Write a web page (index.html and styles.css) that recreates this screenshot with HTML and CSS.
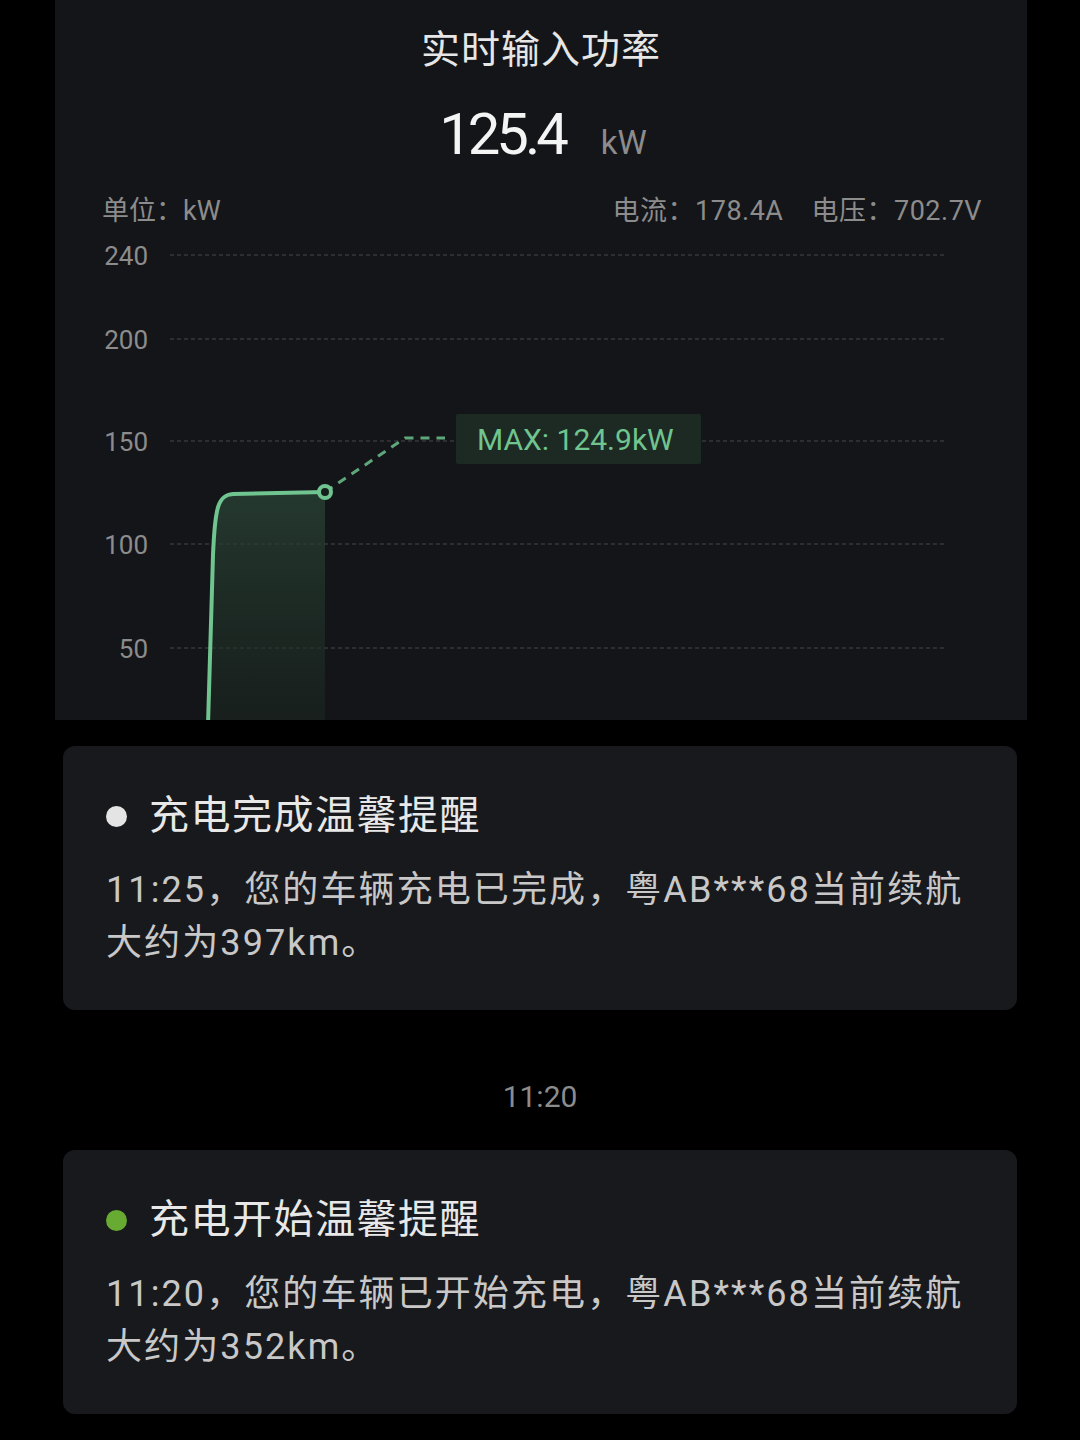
FILE: index.html
```html
<!DOCTYPE html>
<html lang="zh-CN">
<head>
  <meta charset="utf-8">
  <meta name="viewport" content="width=device-width, initial-scale=1">
  <title>充电记录</title>
  <link rel="stylesheet" href="styles.css">
</head>
<body>
  <section class="panel">
    <h1 class="panel-title">实时输入功率</h1>
    <div class="power">
      <span class="power-value">125.4</span>
      <span class="power-unit">kW</span>
    </div>
    <div class="meta">
      <span>单位：kW</span>
      <span class="meta-right">
        <span>电流：178.4A</span>
        <span>电压：702.7V</span>
      </span>
    </div>

    <svg class="chart" viewBox="0 0 972 485" width="972" height="485">
      <defs>
        <linearGradient id="area" x1="0" y1="0" x2="0" y2="1">
          <stop offset="0" stop-color="#2a4436" stop-opacity="0.75"/>
          <stop offset="1" stop-color="#1b2820" stop-opacity="0.5"/>
        </linearGradient>
      </defs>

      <g class="grid">
        <line x1="115" y1="20" x2="892" y2="20"/>
        <line x1="115" y1="104" x2="892" y2="104"/>
        <line x1="115" y1="206" x2="892" y2="206"/>
        <line x1="115" y1="309" x2="892" y2="309"/>
        <line x1="115" y1="413" x2="892" y2="413"/>
      </g>

      <g class="axis">
        <text x="93" y="30">240</text>
        <text x="93" y="114">200</text>
        <text x="93" y="216">150</text>
        <text x="93" y="319">100</text>
        <text x="93" y="423">50</text>
      </g>

      <path class="area" d="M153,490 L158,320 C160,272 163,260 178,259 L270,257 L270,490 Z"/>
      <path class="line" d="M153,490 L158,320 C160,272 163,260 178,259 L270,257"/>
      <path class="guide" d="M270,257 L350,203 L390,203"/>
      <circle class="point" cx="270" cy="257" r="6"/>

      <rect class="tip" x="401" y="179" width="245" height="50" rx="2"/>
      <text class="tip-text" x="422" y="215">MAX: 124.9kW</text>
    </svg>
  </section>

  <article class="card">
    <h2 class="card-title"><span class="dot"></span>充电完成温馨提醒</h2>
    <p class="card-body">11:25，您的车辆充电已完成，粤AB***68当前续航大约为397km。</p>
  </article>

  <div class="time">11:20</div>

  <article class="card">
    <h2 class="card-title"><span class="dot dot-green"></span>充电开始温馨提醒</h2>
    <p class="card-body">11:20，您的车辆已开始充电，粤AB***68当前续航大约为352km。</p>
  </article>
</body>
</html>
```

FILE: styles.css
```css
:root {
  --bg: #000;
  --panel: #141519;
  --card: #18191c;
  --text: #e8e8e8;
  --body: #c8c8c8;
  --muted: #8c8c8c;
  --green: #70c48f;
  --font: Roboto, "Noto Sans CJK SC", sans-serif;
}

body {
  margin: 0;
  background-color: var(--bg);
  color: var(--text);
  font-family: var(--font);
}

.panel {
  box-sizing: border-box;
  margin: 0 53px 0 55px;
  width: 972px;
  height: 720px;
  padding-top: 26px;
  background-color: var(--panel);
  overflow: hidden;
}

.panel-title {
  margin: 0;
  font-size: 39px;
  font-weight: 400;
  line-height: 48px;
  letter-spacing: 1px;
  text-align: center;
  color: #e6e6e6;
}

.power {
  display: flex;
  justify-content: center;
  align-items: baseline;
  gap: 36px;
  margin-top: 26px;
  height: 68px;
  line-height: 68px;
}

.power-value {
  margin-left: 4px;
  font-size: 58px;
  font-weight: 400;
  letter-spacing: -4px;
  color: #f4f4f4;
}

.power-unit {
  font-size: 33px;
  color: var(--muted);
}

.meta {
  display: flex;
  justify-content: space-between;
  margin-top: 23px;
  padding: 0 45px 0 47px;
  font-size: 27px;
  line-height: 40px;
  color: var(--muted);
}

.meta-right {
  display: flex;
  gap: 28px;
  letter-spacing: 0.5px;
}

.chart {
  display: block;
  margin-top: 4px;
}

.grid line {
  stroke: #35373c;
  stroke-width: 1.5;
  stroke-dasharray: 4 3;
}

.axis text {
  fill: var(--muted);
  font-family: var(--font);
  font-size: 26px;
  text-anchor: end;
}

.area {fill: url(#area)}

.line {
  fill: none;
  stroke: var(--green);
  stroke-width: 4;
  stroke-linejoin: round;
}

.guide {
  fill: none;
  stroke: #5fa77b;
  stroke-width: 3;
  stroke-dasharray: 9 7;
}

.point {
  fill: #16201b;
  stroke: var(--green);
  stroke-width: 4;
}

.tip {fill: #1c2a23}

.tip-text {
  fill: var(--green);
  font-family: var(--font);
  font-size: 30px;
}

.card {
  box-sizing: border-box;
  margin: 26px 63px 0;
  width: 954px;
  padding: 42px 43px 40px;
  background-color: var(--card);
  border-radius: 12px;
}

.card-title {
  display: flex;
  align-items: center;
  margin: 0;
  font-size: 40px;
  font-weight: 400;
  line-height: 56px;
  letter-spacing: 1.5px;
  color: var(--text);
}

.dot {
  width: 21px;
  height: 21px;
  margin-right: 22px;
  border-radius: 50%;
  background-color: #e4e4e4;
}

.dot-green {background-color: #68ab33}

.card-body {
  margin: 20px 0 0;
  font-size: 36px;
  line-height: 53px;
  letter-spacing: 2.1px;
  color: var(--body);
}

.time {
  margin: 67px 0 33px;
  font-size: 30px;
  line-height: 40px;
  text-align: center;
  color: var(--muted);
}

.time + .card {margin-top: 0}
```
